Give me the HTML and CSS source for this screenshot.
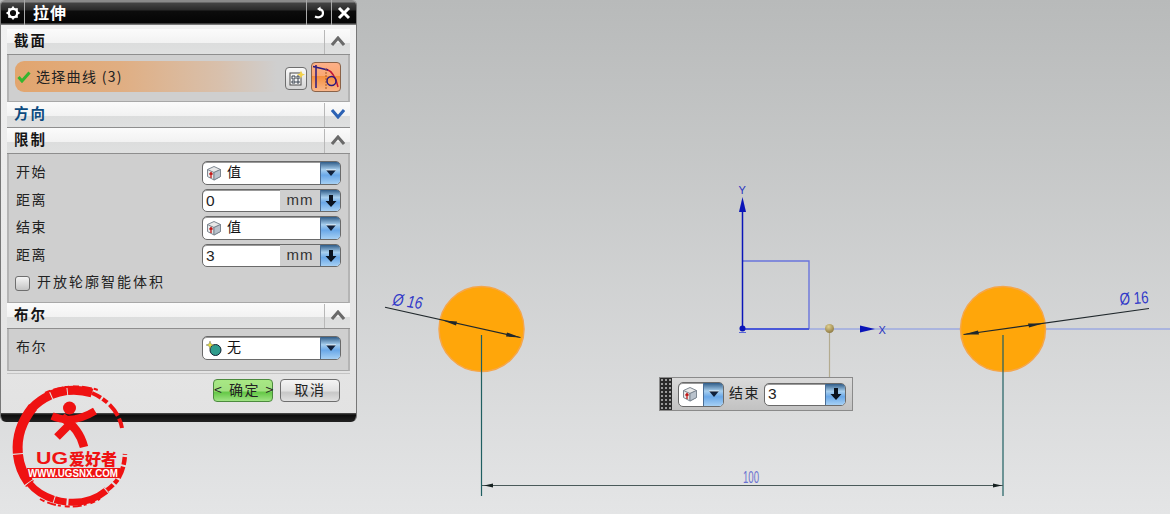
FILE: index.html
```html
<!DOCTYPE html>
<html lang="zh">
<head>
<meta charset="utf-8">
<title>拉伸</title>
<link rel="stylesheet" href="styles.css">
</head>
<body>
<svg width="0" height="0" class="defs">
  <defs>
    <symbol id="cube" viewBox="0 0 16 16">
      <path d="M8 1.500 14.500 4.500V11.500L8 15 1.500 11.500V4.500Z" fill="#e8e8e8" stroke="#7d8791"/>
      <path d="M1.500 4.500 8 7.500 14.500 4.500 M8 7.500V15" fill="none" stroke="#7d8791"/>
      <path d="M8 7.500 14.500 4.500V11.500L8 15Z" fill="#b9c2cc" stroke="#7d8791"/>
      <path d="M5 13V8M3.500 9.500 5 7.500 6.500 9.500" fill="none" stroke="#c01818" stroke-width="1.300"/>
    </symbol>
    <symbol id="caret" viewBox="0 0 12 12">
      <path d="M1 3H11L6 9Z" fill="#10203a"/>
      <path d="M1 3H11" stroke="#fff" stroke-width=".8"/>
    </symbol>
    <symbol id="down" viewBox="0 0 12 14">
      <path d="M4 1H8V7H11.500L6 13 .5 7H4Z" fill="#0c1420"/>
    </symbol>
    <symbol id="chev" viewBox="0 0 14 10">
      <path d="M1 9 7 2 13 9" fill="none" stroke="currentColor" stroke-width="3"/>
    </symbol>
  </defs>
</svg>

<main class="viewport">
  <svg class="scene" width="1170" height="514" viewBox="0 0 1170 514">
    <defs>
      <radialGradient id="ball" cx=".4" cy=".3" r=".8">
        <stop offset="0" stop-color="#e0d090"/>
        <stop offset="1" stop-color="#85703a"/>
      </radialGradient>
    </defs>
    <!-- datum -->
    <path d="M743 329H1170" stroke="#aab4de" stroke-width="2" fill="none"/>
    <path d="M743 261H809V329" stroke="#6a74dc" stroke-width="1.400" fill="none"/>
    <path d="M743 329H809" stroke="#4a58d8" stroke-width="2.200" fill="none"/>
    <path d="M742.500 329V205" stroke="#0a14b8" stroke-width="1.500" fill="none"/>
    <path d="M742.500 197 746 212H739Z" fill="#0a14b8"/>
    <path d="M860 325.500 875 329 860 332.500Z" fill="#0a14b8"/>
    <circle cx="742.500" cy="328.500" r="3" fill="#0a14b8"/>
    <path d="M739 332.500H746" stroke="#5a66d8" fill="none"/>
    <text class="axis" x="738.500" y="194">Y</text>
    <text class="axis" x="878.500" y="334">X</text>
    <path d="M829.500 329V378" stroke="#b3ab90" stroke-width="1.200" fill="none"/>
    <circle cx="829.500" cy="328.500" r="4.500" fill="url(#ball)"/>

    <!-- circles -->
    <circle cx="481.500" cy="329" r="42.500" fill="#ffa60a" stroke="#f5a64a" stroke-width="1.500"/>
    <circle cx="1003" cy="329" r="42.500" fill="#ffa60a" stroke="#f5a64a" stroke-width="1.500"/>

    <!-- dims -->
    <g stroke="#1f5f62" stroke-width="1.200" fill="none">
      <path d="M481.500 335V496"/>
      <path d="M1003 335V496"/>
    </g>
    <path d="M482 485.500H1003" stroke="#4a5a5a" stroke-width="1.200" fill="none"/>
    <path d="M484 485.500 493 483.500V487.500Z M1002 485.500 993 483.500V487.500Z" fill="#152020"/>
    <text class="dim dim-h" x="743" y="483" textLength="16" lengthAdjust="spacingAndGlyphs">100</text>

    <path d="M385 307.300 520.500 337.500" stroke="#20282c" stroke-width="1.100" fill="none"/>
    <path d="M443 320.500 457 321.500 456 325.500Z M520.500 337.500 506 336.500 507 332.500Z" fill="#20282c"/>
    <text class="dim" transform="translate(392 305) rotate(8)" textLength="30" lengthAdjust="spacingAndGlyphs">Ø 16</text>

    <path d="M963.500 334.500 1149 308.500" stroke="#20282c" stroke-width="1.100" fill="none"/>
    <path d="M963.500 334.500 978 330.500 979 334.500Z M1043 323.500 1028 323.500 1029 327.500Z" fill="#20282c"/>
    <text class="dim dim-up" transform="translate(1120 305) rotate(-4)" textLength="29" lengthAdjust="spacingAndGlyphs">Ø 16</text>

    <!-- watermark -->
    <g class="mark">
      <g fill="none" stroke="#ef1212">
        <path d="M31 409C47 392 70 386 92 393" stroke-width="9" stroke-dasharray="24 1 16 1 30 2"/>
        <path d="M45 393C60 386 78 384 98 390" stroke-width="2" stroke-dasharray="6 3 10 2 4 4"/>
        <path d="M92 393C108 400 119 412 122 428" stroke-width="4" stroke-dasharray="10 2 6 3 14 3"/>
        <path d="M33 407C13 432 13 462 30 484" stroke-width="10" stroke-dasharray="50 1 30 1"/>
        <path d="M29 483C46 504 84 510 107 490" stroke-width="7" stroke-dasharray="30 1 12 2 40 1"/>
        <path d="M40 499C58 509 82 509 100 499" stroke-width="2" stroke-dasharray="5 3 9 2 3 4"/>
        <path d="M107 490C118 482 124 472 125 454" stroke-width="4.500" stroke-dasharray="8 2 5 2 12 2"/>
      </g>
      <circle cx="69.500" cy="408" r="6.500" fill="#ef1212"/>
      <g fill="none" stroke="#ef1212">
        <path d="M52 416C68 423 82 419 95 411" stroke-width="7.500"/>
        <path d="M62 417C74 425 81 435 84 447" stroke-width="8.500"/>
        <path d="M71 423 57 437" stroke-width="8"/>
      </g>
      <text class="mark-ug" x="36" y="464" textLength="32" lengthAdjust="spacingAndGlyphs">UG</text>
      <text class="mark-cn" x="69" y="464.500" textLength="48" lengthAdjust="spacingAndGlyphs">爱好者</text>
      <rect x="27" y="468" width="93" height="10" fill="#ef1212"/>
      <text class="mark-url" x="28" y="477" textLength="90" lengthAdjust="spacingAndGlyphs">WWW.UGSNX.COM</text>
    </g>
  </svg>

  <section class="dialog">
    <header class="titlebar">
      <span class="tb-icon tb-gear">
        <svg width="14" height="14" viewBox="0 0 14 14"><circle cx="7" cy="7" r="4.300" fill="none" stroke="#fff" stroke-width="2.400"/><path d="M7 .5V3M7 11V13.500M.5 7H3M11 7H13.500M2.400 2.400 4 4M10 10 11.600 11.600M2.400 11.600 4 10M10 4 11.600 2.400" stroke="#fff" stroke-width="1.800"/></svg>
      </span>
      <h1 class="title">拉伸</h1>
      <span class="tb-icon tb-btn">
        <svg width="14" height="14" viewBox="0 0 14 14"><path d="M3 10.500C7 12.500 11 10.500 11 7 11 5 9.500 3.500 7.500 3" fill="none" stroke="#fff" stroke-width="2.200"/><path d="M8.500 .5V5.500L5 3Z" fill="#fff"/></svg>
      </span>
      <span class="tb-icon tb-btn">
        <svg width="14" height="14" viewBox="0 0 14 14"><path d="M2 2 12 12M12 2 2 12" stroke="#fff" stroke-width="3"/></svg>
      </span>
    </header>

    <div class="dialog-body">
      <div class="group-head">
        <h2 class="group-title">截面</h2>
        <span class="chev"><svg width="14" height="10"><use href="#chev"/></svg></span>
      </div>
      <div class="group select-group">
        <div class="select-row">
          <svg class="check" width="14" height="13" viewBox="0 0 14 13"><path d="M1.500 7 5 11 12.500 2.500" fill="none" stroke="#35b52e" stroke-width="3"/></svg>
          <span class="select-label">选择曲线 (3)</span>
        </div>
        <span class="icon-btn">
          <svg width="17" height="17" viewBox="0 0 17 17">
            <rect x="2" y="3" width="11" height="12" fill="#f4f4f4" stroke="#4a4a4a"/>
            <path d="M4 6H7V9H4ZM9 6H11V9H9ZM4 11H7V13H4ZM9 11H11V13H9Z" fill="none" stroke="#39424e" stroke-width="1"/>
            <path d="M13 .5 14.200 3.500 17 4.500 14.200 5.700 13 8.500 11.800 5.700 9 4.500 11.800 3.500Z" fill="#f4d24a"/>
          </svg>
        </span>
        <span class="icon-btn icon-btn-active">
          <svg width="28" height="28" viewBox="0 0 28 28">
            <path d="M14 6C20 8 24 15 26 24" fill="none" stroke="#c01838" stroke-width="1.500"/>
            <path d="M4 2V25M1 3.500 16 7" fill="none" stroke="#2a1a80" stroke-width="1.500"/>
            <path d="M14 6V27" fill="none" stroke="#a85a20" stroke-dasharray="2 1"/>
            <circle cx="19.500" cy="18" r="4.500" fill="none" stroke="#2a1a80" stroke-width="1.500"/>
          </svg>
        </span>
      </div>

      <div class="group-head group-head-blue">
        <h2 class="group-title">方向</h2>
        <span class="chev"><svg width="14" height="10" class="flip"><use href="#chev"/></svg></span>
      </div>

      <div class="group-head">
        <h2 class="group-title">限制</h2>
        <span class="chev"><svg width="14" height="10"><use href="#chev"/></svg></span>
      </div>
      <div class="group limit-group">
        <div class="row">
          <span class="label">开始</span>
          <div class="field field-select">
            <svg class="cube" width="16" height="16"><use href="#cube"/></svg>
            <span class="value">值</span>
            <span class="arrow"><svg width="12" height="12"><use href="#caret"/></svg></span>
          </div>
        </div>
        <div class="row">
          <span class="label">距离</span>
          <div class="field field-num">
            <span class="num">0</span>
            <span class="unit">mm</span>
            <span class="arrow"><svg width="12" height="14"><use href="#down"/></svg></span>
          </div>
        </div>
        <div class="row">
          <span class="label">结束</span>
          <div class="field field-select">
            <svg class="cube" width="16" height="16"><use href="#cube"/></svg>
            <span class="value">值</span>
            <span class="arrow"><svg width="12" height="12"><use href="#caret"/></svg></span>
          </div>
        </div>
        <div class="row">
          <span class="label">距离</span>
          <div class="field field-num">
            <span class="num">3</span>
            <span class="unit">mm</span>
            <span class="arrow"><svg width="12" height="14"><use href="#down"/></svg></span>
          </div>
        </div>
        <label class="check-row">
          <span class="checkbox"></span>
          <span class="label label-wide">开放轮廓智能体积</span>
        </label>
      </div>

      <div class="group-head">
        <h2 class="group-title">布尔</h2>
        <span class="chev"><svg width="14" height="10"><use href="#chev"/></svg></span>
      </div>
      <div class="group bool-group">
        <div class="row">
          <span class="label">布尔</span>
          <div class="field field-select">
            <svg class="cube" width="16" height="16" viewBox="0 0 16 16"><circle cx="9.500" cy="10" r="5.500" fill="#2f9c8c" stroke="#123"/><path d="M4 1 5 4 8 5 5 6 4 9 3 6 0 5 3 4Z" fill="#e8e23a" stroke="#555" stroke-width=".4"/></svg>
            <span class="value">无</span>
            <span class="arrow"><svg width="12" height="12"><use href="#caret"/></svg></span>
          </div>
        </div>
      </div>

      <div class="actions">
        <button class="btn btn-ok" type="button">&lt; 确定 &gt;</button>
        <button class="btn" type="button">取消</button>
      </div>
    </div>
    <div class="dialog-foot"></div>
  </section>

  <div class="floatbar">
    <span class="grip"></span>
    <div class="field field-mini">
      <svg class="cube" width="16" height="16"><use href="#cube"/></svg>
      <span class="arrow"><svg width="12" height="12"><use href="#caret"/></svg></span>
    </div>
    <span class="label">结束</span>
    <div class="field field-mini-num">
      <span class="num">3</span>
      <span class="arrow"><svg width="12" height="14"><use href="#down"/></svg></span>
    </div>
  </div>
</main>
</body>
</html>
```

FILE: styles.css
```css
* { box-sizing: border-box; }
html, body { margin: 0; padding: 0; }
body {
  width: 1170px;
  height: 514px;
  overflow: hidden;
  font-family: "Noto Sans CJK SC", "Liberation Sans", sans-serif;
  color: #111;
}
.defs { position: absolute; }
.viewport {
  position: relative;
  width: 1170px;
  height: 514px;
  background: linear-gradient(#b8baba 0, #e4e5e6 100%);
  overflow: hidden;
}
.scene { position: absolute; left: 0; top: 0; z-index: 2; }
.axis { font: 11px "Liberation Sans", sans-serif; fill: #2a34c0; }
.dim { font: italic 17px "Liberation Sans", sans-serif; fill: #3038c8; }
.dim-up { font-style: normal; }
.dim-h { font-style: normal; font-size: 16px; fill: #6a72d0; }
.mark-ug { font: 900 16px "Liberation Sans", sans-serif; fill: #ef1212; }
.mark-cn { font: 900 15.500px "Noto Sans CJK SC", sans-serif; fill: #ef1212; }
.mark-url { font: bold 11px "Liberation Sans", sans-serif; fill: #fff; }

/* dialog */
.dialog {
  position: absolute;
  left: 0;
  top: 0;
  z-index: 1;
  width: 357px;
  height: 422px;
  display: flex;
  flex-direction: column;
  background: linear-gradient(#f2f2f2, #e2e2e2);
  border-left: 1px solid #777;
  border-right: 1px solid #777;
  border-radius: 5px 5px 6px 6px;
  overflow: hidden;
}
.titlebar {
  height: 25px;
  flex: none;
  display: flex;
  align-items: center;
  background: linear-gradient(#8a8a8a 0, #8a8a8a 2px, #444 3px, #2a2a2a 10px, #0c0c0c 11px, #050505 23px, #777 24px);
  color: #fff;
}
.tb-icon {
  height: 100%;
  display: flex;
  align-items: center;
  justify-content: center;
}
.tb-gear { width: 24px; border-right: 1px solid #aaa; }
.title {
  flex: 1;
  margin: 0 0 0 8px;
  font-size: 16px;
  font-weight: 700;
  letter-spacing: 1px;
  line-height: 23px;
}
.tb-btn { width: 25px; border-left: 1px solid #aaa; }
.dialog-body {
  flex: 1;
  padding: 4px 6px 0;
  display: flex;
  flex-direction: column;
}
.group-head {
  height: 26px;
  flex: none;
  display: flex;
  align-items: stretch;
  background: linear-gradient(#fbfbfb 0, #f2f2f2 55%, #dcdddd 56%, #dfe0e0 100%);
  border-bottom: 1px solid #8e8e8e;
}
.group-title {
  flex: 1;
  margin: 0;
  padding-left: 7px;
  font-size: 14.500px;
  font-weight: 700;
  letter-spacing: 2px;
  line-height: 22px;
  color: #151515;
}
.group-head-blue .group-title { color: #0c4a80; }
.chev {
  width: 26px;
  margin: 1px 0 0;
  padding-bottom: 2px;
  display: flex;
  align-items: center;
  justify-content: center;
  border-left: 1px solid #b8b8b8;
  color: #6a6a6a;
}
.group-head-blue .chev { color: #2c62b4; }
.flip { transform: rotate(180deg); }
.group {
  background: #cfcfcf;
  border-left: 2px solid #b4b4b4;
  border-right: 2px solid #b4b4b4;
  border-bottom: 1px solid #a8a8a8;
  flex: none;
}
.select-group {
  height: 47px;
  display: flex;
  align-items: center;
  padding-left: 6px;
}
.select-row {
  width: 262px;
  height: 31px;
  margin-top: -3px;
  display: flex;
  align-items: center;
  padding-left: 2px;
  border-radius: 9px 0 0 9px;
  background: linear-gradient(90deg, #e2a56e 0, #e0ae82 40%, #d8c0ac 78%, #cfcfcf 100%);
}
.check { flex: none; }
.select-label {
  margin-left: 5px;
  padding-bottom: 2px;
  font-size: 14px;
  letter-spacing: 1.300px;
  color: #222;
}
.icon-btn {
  width: 22px;
  height: 23px;
  margin-left: 8px;
  display: flex;
  align-items: center;
  justify-content: center;
  border: 1px solid #6e6e6e;
  border-radius: 4px;
  background: linear-gradient(#fafafa, #d4d4d4);
  flex: none;
}
.icon-btn-active {
  width: 30px;
  height: 30px;
  margin-left: 4px;
  margin-top: -3px;
  border-color: #8a6248;
  background: linear-gradient(#fdb088 0, #f9a873 45%, #f58e3a 46%, #f9b68a 100%);
}
.limit-group {
  height: 149px;
  padding: 7px 7px 0 7px;
  display: flex;
  flex-direction: column;
}
.bool-group {
  height: 42px;
  padding: 7px 7px 0 7px;
}
.row {
  display: flex;
  align-items: center;
  justify-content: space-between;
  margin-bottom: 4px;
}
.label {
  padding-bottom: 4px;
  font-size: 14px;
  letter-spacing: 1.500px;
  color: #222;
  line-height: 18px;
}
.label-wide { letter-spacing: 2px; }
.field {
  position: relative;
  display: flex;
  align-items: center;
  background: #fff;
  border: 1px solid #6a6a6a;
  border-radius: 5px;
  box-shadow: inset 0 1px 0 #999;
  overflow: hidden;
}
.field-select { width: 139px; height: 24px; }
.field-num { width: 139px; height: 23px; }
.cube { margin-left: 3px; flex: none; }
.value { flex: 1; margin-left: 5px; padding-bottom: 4px; font-size: 14px; line-height: 18px; }
.num {
  flex: 1;
  padding-left: 3px;
  font: 15.500px "Liberation Sans", sans-serif;
  color: #222;
}
.unit {
  width: 40px;
  align-self: stretch;
  background: #cfcfcf;
  font: 15px/20px "Liberation Sans", sans-serif;
  letter-spacing: 1px;
  text-align: center;
  color: #333;
}
.arrow {
  width: 20px;
  align-self: stretch;
  flex: none;
  display: flex;
  align-items: center;
  justify-content: center;
  background: linear-gradient(#2f5c88 0, #a8cfee 35%, #6aa8e8 60%, #a6d0f4 100%);
  border-left: 1px solid #4a6e96;
}
.check-row {
  display: flex;
  align-items: center;
  gap: 7px;
  margin: 1px 0 0 -1px;
}
.checkbox {
  width: 15px;
  height: 15px;
  border: 1px solid #6e6e6e;
  border-radius: 3px;
  background: linear-gradient(#f4f4f4, #c4c4c4);
}
.actions {
  margin-top: 2px;
  padding: 5px 10px 0 0;
  border-top: 1px solid #c4c4c4;
  display: flex;
  justify-content: flex-end;
  gap: 7px;
}
.btn {
  width: 60px;
  height: 23px;
  padding: 0 0 3px;
  border: 1px solid #6e6e6e;
  border-radius: 4px;
  background: linear-gradient(#f4f4f4 0, #e2e2e2 50%, #c8c8c8 60%, #e0e0e0 100%);
  font: 14px/18px "Noto Sans CJK SC", sans-serif;
  letter-spacing: 1.500px;
  word-spacing: 1px;
  color: #222;
}
.btn-ok {
  border-color: #4c8a3e;
  background: linear-gradient(#a8e884 0, #a0e080 50%, #66c848 60%, #a0e484 100%);
  white-space: nowrap;
}
.dialog-foot {
  height: 9px;
  flex: none;
  margin: 0 -1px;
  background: linear-gradient(#555 0, #0c0c0c 2px, #222 100%);
}

/* floating bar */
.floatbar {
  position: absolute;
  left: 659px;
  top: 377px;
  z-index: 3;
  width: 194px;
  height: 34px;
  display: flex;
  align-items: center;
  background: linear-gradient(#dadada, #c2c2c2);
  border: 1px solid #8a8a8a;
  padding-right: 6px;
}
.grip {
  width: 12px;
  align-self: stretch;
  background-color: #2a2a2a;
  background-image: radial-gradient(#9a9a9a 1px, transparent 1.200px);
  background-size: 4px 4px;
}
.field-mini { width: 46px; height: 25px; margin-left: 6px; justify-content: space-between; }
.floatbar .label { margin-left: 5px; }
.field-mini-num { flex: 1; height: 23px; margin-left: 4px; }
```
